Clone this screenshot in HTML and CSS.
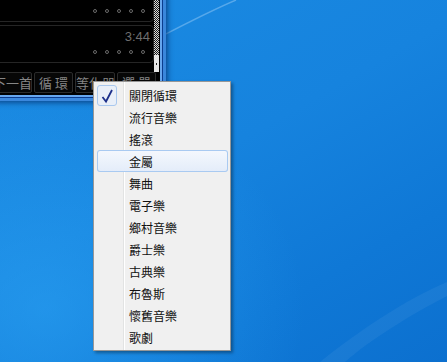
FILE: index.html
```html
<!DOCTYPE html>
<html lang="zh-Hant">
<head>
  <meta charset="UTF-8" />
  <meta name="viewport" content="width=device-width, initial-scale=1" />
  <title>播放器 - 曲風選單</title>
  <link rel="stylesheet" href="styles.css">
</head>
<body>

<svg class="wallpaper" width="447" height="362" viewBox="0 0 447 362">
  <path d="M160 37 C185 24 210 11 236 0" stroke="rgba(200,230,255,0.35)" stroke-width="1.4" fill="none" />
  <path d="M320 362 C360 330 405 300 447 282 L447 296 C410 315 370 340 345 362 Z" fill="rgba(255,255,255,0.05)" />
</svg>

<div class="player">
  <div class="playlist">
    <div class="tracks">
      <div class="track">
        <div class="time">3:57</div>
        <div class="dots"><span></span><span></span><span></span><span></span><span></span></div>
      </div>
      <div class="track">
        <div class="time">3:44</div>
        <div class="dots"><span></span><span></span><span></span><span></span><span></span></div>
      </div>
    </div>
    <div class="scrollbar"><div class="thumb"></div></div>
  </div>
  <div class="controls">
    <button class="ctl wide">下一首</button>
    <button class="ctl">循 環</button>
    <button class="ctl wide">等化器</button>
    <button class="ctl">選 單</button>
  </div>
</div>

<ul class="menu">
  <li class="checked">
    <span class="mark">
      <svg width="20" height="21" viewBox="0 0 20 21"><polyline points="5.5,12 9,16.5 15,5" fill="none" stroke="#1d2f8a" stroke-width="1.8" /></svg>
    </span>
    關閉循環
  </li>
  <li><span class="mark"></span>流行音樂</li>
  <li><span class="mark"></span>搖滾</li>
  <li class="hover"><span class="mark"></span>金屬</li>
  <li><span class="mark"></span>舞曲</li>
  <li><span class="mark"></span>電子樂</li>
  <li><span class="mark"></span>鄉村音樂</li>
  <li><span class="mark"></span>爵士樂</li>
  <li><span class="mark"></span>古典樂</li>
  <li><span class="mark"></span>布魯斯</li>
  <li><span class="mark"></span>懷舊音樂</li>
  <li><span class="mark"></span>歌劇</li>
</ul>

</body>
</html>
```

FILE: styles.css
```css
body {
  margin: 0;
  width: 447px;
  height: 362px;
  overflow: hidden;
  position: relative;
  font-family: "Noto Sans CJK TC", "Noto Sans", sans-serif;
  background:
    radial-gradient(ellipse 260px 220px at 10% 85%, rgba(45,165,245,0.55), transparent),
    linear-gradient(150deg, #1b8be2 0%, #1683de 45%, #0f78d6 75%, #0c70cf 100%);
}
.wallpaper {
  position: absolute;
  left: 0;
  top: 0;
}

/* player window, mostly off screen */
.player {
  position: absolute;
  left: -10px;
  top: -16px;
  width: 170px;
  height: 111px;
  background: #000;
  border-right: 2px solid #66a6ee;
  border-bottom: 2px solid #66a6ee;
  box-shadow: 1px 1px 0 #0c3c8e, 4px 4px 0 #3a87dc, 6px 6px 5px rgba(0,25,80,0.55);
}
.playlist {
  display: flex;
  height: 88px;
}
.tracks {
  width: 164px;
}
.track {
  box-sizing: border-box;
  height: 38px;
  margin-bottom: 3px;
  padding-right: 3px;
  border: 1px solid #252525;
  border-radius: 4px;
}
.time {
  margin-top: 4px;
  text-align: right;
  font: 13px/14px "Liberation Sans", sans-serif;
  color: #6e6e6e;
}
.dots {
  display: flex;
  justify-content: flex-end;
  gap: 8px;
  margin-top: 6px;
  padding-right: 5px;
}
.dots span {
  box-sizing: border-box;
  width: 4px;
  height: 4px;
  border: 1px solid #6a6a6a;
  border-radius: 50%;
}
.scrollbar {
  width: 5px;
  margin-right: 1px;
  display: flex;
  flex-direction: column;
  justify-content: flex-end;
  background: repeating-conic-gradient(#d8d8d8 0 25%, #1a1a1a 0 50%) 0 0 / 2px 2px;
}
.thumb {
  height: 17px;
  background: #e6e6e6;
  display: flex;
  align-items: center;
  justify-content: center;
}
.thumb::after {
  content: "";
  width: 1px;
  height: 2px;
  background: #222;
}
.controls {
  display: flex;
  gap: 2px;
  padding-left: 2px;
}
.ctl {
  width: 39px;
  height: 21px;
  padding: 0;
  background: #070707;
  border: 1px solid #2b2b2b;
  border-radius: 2px;
  color: #868686;
  font: 13px/19px "Noto Sans CJK TC", sans-serif;
  white-space: nowrap;
}
.ctl.wide {
  width: 40px;
}

/* context menu */
.menu {
  position: absolute;
  left: 93px;
  top: 81px;
  box-sizing: border-box;
  width: 138px;
  height: 270px;
  margin: 0;
  padding: 2px 2px 2px 3px;
  list-style: none;
  border: 1px solid #979797;
  background:
    linear-gradient(to right, transparent 29px, #e2e3e3 29px, #e2e3e3 30px, #fff 30px, #fff 31px, transparent 31px),
    #f0f0f0;
  box-shadow: 2px 2px 3px rgba(0,0,0,0.35);
}
.menu li {
  display: flex;
  align-items: center;
  height: 22px;
  font-size: 12px;
  color: #111;
  border-radius: 3px;
}
.mark {
  box-sizing: border-box;
  width: 20px;
  height: 21px;
  margin-right: 12px;
  border-radius: 3px;
}
.checked .mark {
  border: 1px solid #a9c8ee;
  background: #e9eff8;
}
.checked .mark svg {
  display: block;
  margin: -1px;
}
.menu li.hover {
  background: linear-gradient(#f5f8fd, #e3ecf9);
  box-shadow: inset 0 0 0 1px #a9caf1;
}
```
